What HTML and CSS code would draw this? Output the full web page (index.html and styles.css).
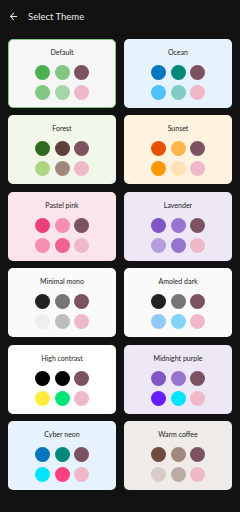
FILE: index.html
```html
<!DOCTYPE html>
<html lang="en">
<head>
    <meta charset="UTF-8">
    <meta name="viewport" content="width=device-width, initial-scale=1.0">
    <title>Select Theme</title>
    <link rel="stylesheet" href="styles.css">
</head>
<body>

<div class="app-bar">
    <svg class="back" width="11" height="11" viewBox="0 0 24 24">
        <path d="M20 11H7.83l5.59-5.59L12 4l-8 8 8 8 1.41-1.41L7.83 13H20v-2z" fill="#e6e6e6"/>
    </svg>
    <span class="title">Select Theme</span>
</div>

<div class="theme-grid">
    <div class="theme-card selected" style="background:#f6f6f6">
        <div class="theme-name">Default</div>
        <div class="swatches">
            <span class="dot" style="background:#4caf50"></span>
            <span class="dot" style="background:#81c784"></span>
            <span class="dot" style="background:#7d5260"></span>
            <span class="dot" style="background:#81c784"></span>
            <span class="dot" style="background:#a5d6a7"></span>
            <span class="dot" style="background:#efb8c8"></span>
        </div>
    </div>
    <div class="theme-card" style="background:#e6f2fd">
        <div class="theme-name">Ocean</div>
        <div class="swatches">
            <span class="dot" style="background:#0277bd"></span>
            <span class="dot" style="background:#00897b"></span>
            <span class="dot" style="background:#7d5260"></span>
            <span class="dot" style="background:#4fc3f7"></span>
            <span class="dot" style="background:#80cbc4"></span>
            <span class="dot" style="background:#efb8c8"></span>
        </div>
    </div>
    <div class="theme-card" style="background:#f1f8e9">
        <div class="theme-name">Forest</div>
        <div class="swatches">
            <span class="dot" style="background:#2e6b1f"></span>
            <span class="dot" style="background:#5d4037"></span>
            <span class="dot" style="background:#7d5260"></span>
            <span class="dot" style="background:#aed581"></span>
            <span class="dot" style="background:#a1887f"></span>
            <span class="dot" style="background:#efb8c8"></span>
        </div>
    </div>
    <div class="theme-card" style="background:#fff3e0">
        <div class="theme-name">Sunset</div>
        <div class="swatches">
            <span class="dot" style="background:#e65100"></span>
            <span class="dot" style="background:#ffb74d"></span>
            <span class="dot" style="background:#7d5260"></span>
            <span class="dot" style="background:#ff9800"></span>
            <span class="dot" style="background:#ffe0b2"></span>
            <span class="dot" style="background:#efb8c8"></span>
        </div>
    </div>
    <div class="theme-card" style="background:#fce4ec">
        <div class="theme-name">Pastel pink</div>
        <div class="swatches">
            <span class="dot" style="background:#ec407a"></span>
            <span class="dot" style="background:#f48fb1"></span>
            <span class="dot" style="background:#7d5260"></span>
            <span class="dot" style="background:#f48fb1"></span>
            <span class="dot" style="background:#f06292"></span>
            <span class="dot" style="background:#efb8c8"></span>
        </div>
    </div>
    <div class="theme-card" style="background:#ede7f6">
        <div class="theme-name">Lavender</div>
        <div class="swatches">
            <span class="dot" style="background:#7e57c2"></span>
            <span class="dot" style="background:#9575cd"></span>
            <span class="dot" style="background:#7d5260"></span>
            <span class="dot" style="background:#b39ddb"></span>
            <span class="dot" style="background:#9575cd"></span>
            <span class="dot" style="background:#efb8c8"></span>
        </div>
    </div>
    <div class="theme-card" style="background:#fafafa">
        <div class="theme-name">Minimal mono</div>
        <div class="swatches">
            <span class="dot" style="background:#212121"></span>
            <span class="dot" style="background:#757575"></span>
            <span class="dot" style="background:#7d5260"></span>
            <span class="dot" style="background:#eeeeee"></span>
            <span class="dot" style="background:#bdbdbd"></span>
            <span class="dot" style="background:#efb8c8"></span>
        </div>
    </div>
    <div class="theme-card" style="background:#fafafa">
        <div class="theme-name">Amoled dark</div>
        <div class="swatches">
            <span class="dot" style="background:#212121"></span>
            <span class="dot" style="background:#757575"></span>
            <span class="dot" style="background:#7d5260"></span>
            <span class="dot" style="background:#90caf9"></span>
            <span class="dot" style="background:#81d4fa"></span>
            <span class="dot" style="background:#efb8c8"></span>
        </div>
    </div>
    <div class="theme-card" style="background:#ffffff">
        <div class="theme-name">High contrast</div>
        <div class="swatches">
            <span class="dot" style="background:#000000"></span>
            <span class="dot" style="background:#000000"></span>
            <span class="dot" style="background:#7d5260"></span>
            <span class="dot" style="background:#ffeb3b"></span>
            <span class="dot" style="background:#00e676"></span>
            <span class="dot" style="background:#efb8c8"></span>
        </div>
    </div>
    <div class="theme-card" style="background:#ede7f6">
        <div class="theme-name">Midnight purple</div>
        <div class="swatches">
            <span class="dot" style="background:#7e57c2"></span>
            <span class="dot" style="background:#9575cd"></span>
            <span class="dot" style="background:#7d5260"></span>
            <span class="dot" style="background:#651fff"></span>
            <span class="dot" style="background:#00e5ff"></span>
            <span class="dot" style="background:#efb8c8"></span>
        </div>
    </div>
    <div class="theme-card" style="background:#e6f2fd">
        <div class="theme-name">Cyber neon</div>
        <div class="swatches">
            <span class="dot" style="background:#0277bd"></span>
            <span class="dot" style="background:#00897b"></span>
            <span class="dot" style="background:#7d5260"></span>
            <span class="dot" style="background:#00e5ff"></span>
            <span class="dot" style="background:#ff4081"></span>
            <span class="dot" style="background:#efb8c8"></span>
        </div>
    </div>
    <div class="theme-card" style="background:#efebe9">
        <div class="theme-name">Warm coffee</div>
        <div class="swatches">
            <span class="dot" style="background:#6d4c41"></span>
            <span class="dot" style="background:#a1887f"></span>
            <span class="dot" style="background:#7d5260"></span>
            <span class="dot" style="background:#d7ccc8"></span>
            <span class="dot" style="background:#bcaaa4"></span>
            <span class="dot" style="background:#efb8c8"></span>
        </div>
    </div>
</div>

</body>
</html>
```

FILE: styles.css
```css
body {
    margin: 0;
    background-color: #121212;
    font-family: Lato, "Liberation Sans", sans-serif;
    width: 240px;
    min-height: 512px;
}
.app-bar {
    display: flex;
    align-items: center;
    height: 32px;
    padding-left: 8px;
}
.back {
    display: block;
    margin-right: 9px;
}
.title {
    color: #e8e8e8;
    font-size: 9.5px;
}
.theme-grid {
    display: grid;
    grid-template-columns: 1fr 1fr;
    column-gap: 8px;
    row-gap: 7.4px;
    padding: 7px 8px 0 8px;
}
.theme-card {
    height: 69px;
    box-sizing: border-box;
    border-radius: 5px;
    display: flex;
    flex-direction: column;
    align-items: center;
    padding-top: 8px;
}
.theme-card.selected {
    border: 1px solid #81c784;
    padding-top: 7px;
}
.theme-name {
    font-size: 7px;
    line-height: 10px;
    color: #222;
}
.swatches {
    display: grid;
    grid-template-columns: repeat(3, 15px);
    gap: 5px 4.5px;
    margin-top: 8px;
}
.dot {
    width: 15px;
    height: 15px;
    border-radius: 50%;
}
```
